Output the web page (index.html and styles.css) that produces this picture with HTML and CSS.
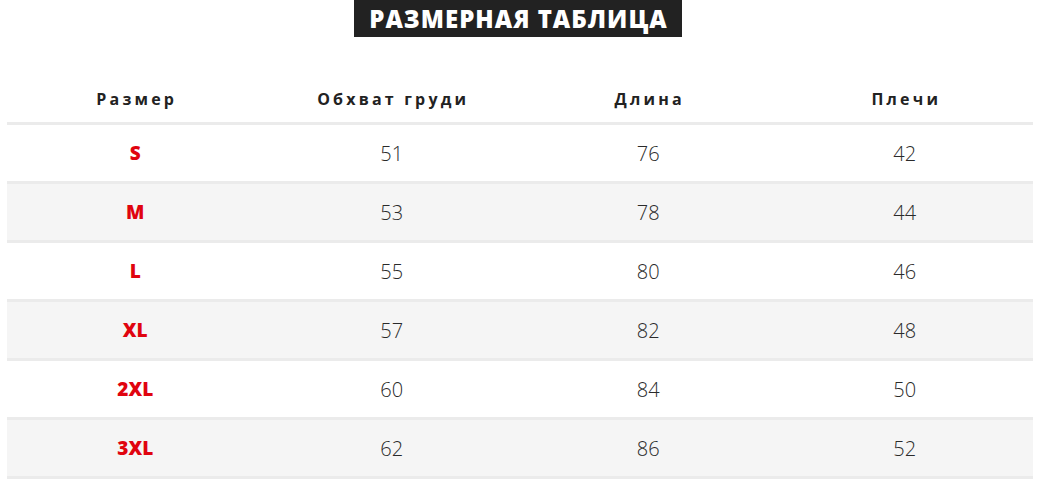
FILE: index.html
```html
<!DOCTYPE html>
<html lang="ru">
<head>
<meta charset="utf-8">
<link rel="stylesheet" href="styles.css">
</head>
<body>
<div class="wrap">
  <div class="title-row"><h1 class="title">РАЗМЕРНАЯ ТАБЛИЦА</h1></div>
  <div class="table">
    <div class="row head">
      <div class="cell">Размер</div>
      <div class="cell">Обхват груди</div>
      <div class="cell">Длина</div>
      <div class="cell">Плечи</div>
    </div>
    <div class="row">
      <div class="cell size">S</div><div class="cell">51</div><div class="cell">76</div><div class="cell">42</div>
    </div>
    <div class="row alt">
      <div class="cell size">M</div><div class="cell">53</div><div class="cell">78</div><div class="cell">44</div>
    </div>
    <div class="row">
      <div class="cell size">L</div><div class="cell">55</div><div class="cell">80</div><div class="cell">46</div>
    </div>
    <div class="row alt">
      <div class="cell size">XL</div><div class="cell">57</div><div class="cell">82</div><div class="cell">48</div>
    </div>
    <div class="row">
      <div class="cell size">2XL</div><div class="cell">60</div><div class="cell">84</div><div class="cell">50</div>
    </div>
    <div class="row alt">
      <div class="cell size">3XL</div><div class="cell">62</div><div class="cell">86</div><div class="cell">52</div>
    </div>
  </div>
</div>
</body>
</html>
```

FILE: styles.css
```css
html, body {
  margin: 0;
  padding: 0;
  background: #ffffff;
}
.wrap {
  width: 1026px;
  margin-left: 7px;
  font-family: "Open Sans", "Liberation Sans", sans-serif;
  color: #333333;
}
.title-row {
  display: flex;
  justify-content: center;
}
.title {
  margin: 0;
  height: 37px;
  padding: 0 14px 0 15px;
  background: #222222;
  color: #ffffff;
  font-size: 24px;
  font-weight: 800;
  letter-spacing: 1px;
  line-height: 37px;
  margin-left: -4px;
}
.table {
  margin-top: 39px;
}
.row {
  display: grid;
  grid-template-columns: repeat(4, 1fr);
  height: 56px;
  border-bottom: 3px solid #ebebeb;
}
.row.alt {
  background: #f5f5f5;
}
.row.head {
  height: 46px;
}
.cell {
  display: flex;
  align-items: center;
  justify-content: center;
  font-size: 20px;
  font-weight: 300;
  color: #2a2a2a;
}
.head .cell {
  font-size: 16px;
  font-weight: 700;
  letter-spacing: 3.2px;
  color: #222222;
  padding-left: 3px;
}
.cell.size {
  color: #e0040f;
  font-weight: 800;
  font-size: 19px;
}
```
